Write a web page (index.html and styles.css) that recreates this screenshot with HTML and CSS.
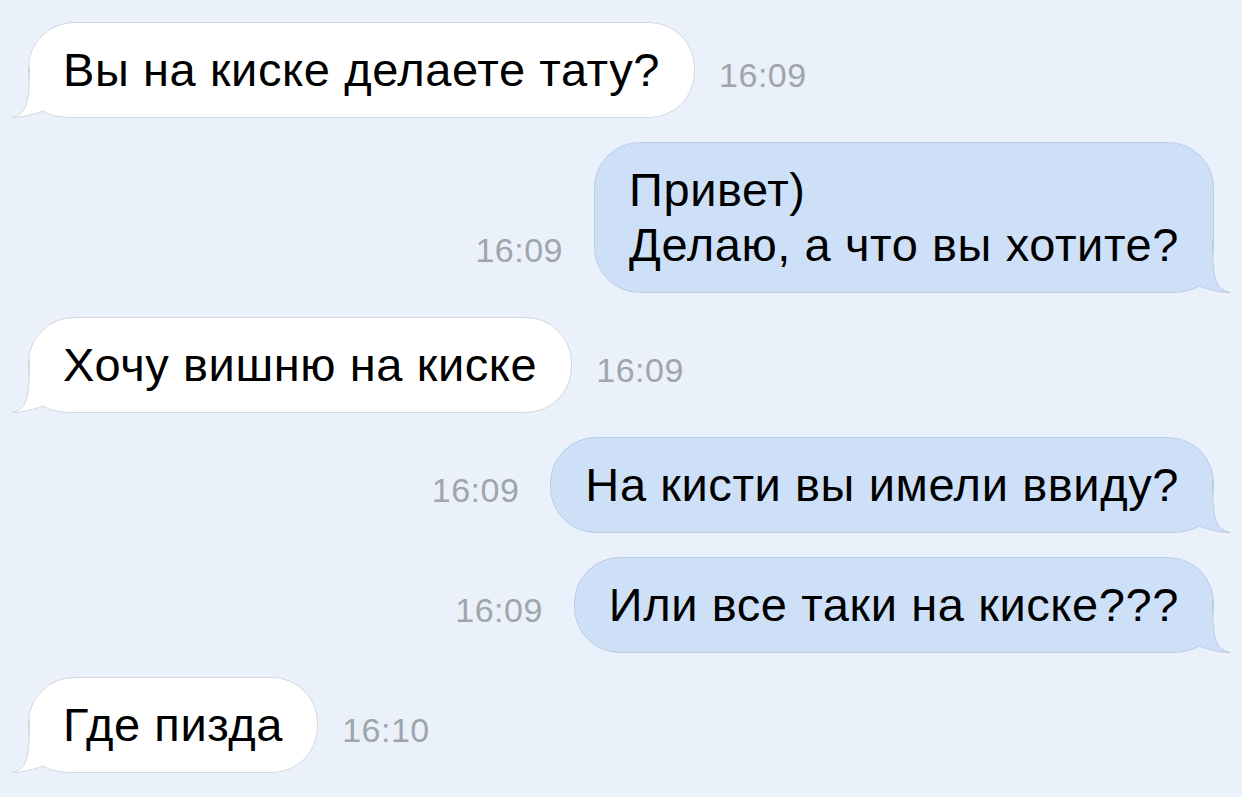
FILE: index.html
```html
<!DOCTYPE html>
<html lang="ru">
<head>
  <meta charset="UTF-8">
  <meta name="viewport" content="width=device-width, initial-scale=1.0">
  <title>Чат</title>
  <link rel="stylesheet" href="styles.css">
</head>
<body>
  <div class="chat">
    <div class="row in">
      <div class="bubble">
        <svg class="tail" viewBox="0 0 48 52"><path class="tail-fill" d="M18.5 0 C18.5 40 15 48 1 51.5 C12 51.5 24 48 32 45 C40 50 50 51.5 64 51.5 L64 48 L40 30 Z"/><path class="tail-line" d="M18.5 0 C18.5 40 15 48 1 51.5 C12 51.5 24 48 32 45 C40 50 50 51.5 64 51.5"/></svg>
        <span class="text">Вы на киске делаете тату?</span>
      </div>
      <span class="time">16:09</span>
    </div>

    <div class="row out">
      <span class="time">16:09</span>
      <div class="bubble">
        <svg class="tail" viewBox="0 0 48 52"><path class="tail-fill" d="M18.5 0 C18.5 40 15 48 1 51.5 C12 51.5 24 48 32 45 C40 50 50 51.5 64 51.5 L64 48 L40 30 Z"/><path class="tail-line" d="M18.5 0 C18.5 40 15 48 1 51.5 C12 51.5 24 48 32 45 C40 50 50 51.5 64 51.5"/></svg>
        <span class="text">Привет)<br>Делаю, а что вы хотите?</span>
      </div>
    </div>

    <div class="row in">
      <div class="bubble">
        <svg class="tail" viewBox="0 0 48 52"><path class="tail-fill" d="M18.5 0 C18.5 40 15 48 1 51.5 C12 51.5 24 48 32 45 C40 50 50 51.5 64 51.5 L64 48 L40 30 Z"/><path class="tail-line" d="M18.5 0 C18.5 40 15 48 1 51.5 C12 51.5 24 48 32 45 C40 50 50 51.5 64 51.5"/></svg>
        <span class="text">Хочу вишню на киске</span>
      </div>
      <span class="time">16:09</span>
    </div>

    <div class="row out">
      <span class="time">16:09</span>
      <div class="bubble">
        <svg class="tail" viewBox="0 0 48 52"><path class="tail-fill" d="M18.5 0 C18.5 40 15 48 1 51.5 C12 51.5 24 48 32 45 C40 50 50 51.5 64 51.5 L64 48 L40 30 Z"/><path class="tail-line" d="M18.5 0 C18.5 40 15 48 1 51.5 C12 51.5 24 48 32 45 C40 50 50 51.5 64 51.5"/></svg>
        <span class="text">На кисти вы имели ввиду?</span>
      </div>
    </div>

    <div class="row out">
      <span class="time">16:09</span>
      <div class="bubble">
        <svg class="tail" viewBox="0 0 48 52"><path class="tail-fill" d="M18.5 0 C18.5 40 15 48 1 51.5 C12 51.5 24 48 32 45 C40 50 50 51.5 64 51.5 L64 48 L40 30 Z"/><path class="tail-line" d="M18.5 0 C18.5 40 15 48 1 51.5 C12 51.5 24 48 32 45 C40 50 50 51.5 64 51.5"/></svg>
        <span class="text">Или все таки на киске???</span>
      </div>
    </div>

    <div class="row in">
      <div class="bubble">
        <svg class="tail" viewBox="0 0 48 52"><path class="tail-fill" d="M18.5 0 C18.5 40 15 48 1 51.5 C12 51.5 24 48 32 45 C40 50 50 51.5 64 51.5 L64 48 L40 30 Z"/><path class="tail-line" d="M18.5 0 C18.5 40 15 48 1 51.5 C12 51.5 24 48 32 45 C40 50 50 51.5 64 51.5"/></svg>
        <span class="text">Где пизда</span>
      </div>
      <span class="time">16:10</span>
    </div>
  </div>
</body>
</html>
```

FILE: styles.css
```css
body {
  margin: 0;
  background: #ebf1fa;
  font-family: "Liberation Sans", Arial, sans-serif;
  color: #000;
  height: 797px;
  overflow: hidden;
}
.chat {
  display: flex;
  flex-direction: column;
  gap: 24px;
  padding: 22px 28px 0 28px;
}
.row {
  display: flex;
  align-items: flex-end;
}
.row.out {
  justify-content: flex-end;
}
.bubble {
  position: relative;
  border: 1px solid #d3d8df;
  background: #fff;
  border-radius: 46px;
  padding: 19px 34px 20px 34px;
  font-size: 47px;
  line-height: 55px;
  letter-spacing: 0.6px;
  white-space: nowrap;
}
.out .bubble {
  background: #cee0f8;
  border-color: #b9cde6;
}
.text {
  position: relative;
}
.tail {
  position: absolute;
  bottom: -1px;
  left: -18px;
  width: 48px;
  height: 52px;
  overflow: visible;
}
.out .tail {
  left: auto;
  right: -18px;
  transform: scaleX(-1);
}
.tail-fill {
  fill: #fff;
}
.tail-line {
  fill: none;
  stroke: #d3d8df;
  stroke-width: 1;
}
.out .tail-fill {
  fill: #cee0f8;
}
.out .tail-line {
  stroke: #b9cde6;
}
.time {
  font-size: 34px;
  line-height: 34px;
  letter-spacing: 0.5px;
  color: #a0a5ad;
  margin-bottom: 26px;
}
.in .time {
  margin-left: 24px;
}
.out .time {
  margin-right: 31px;
}
```
